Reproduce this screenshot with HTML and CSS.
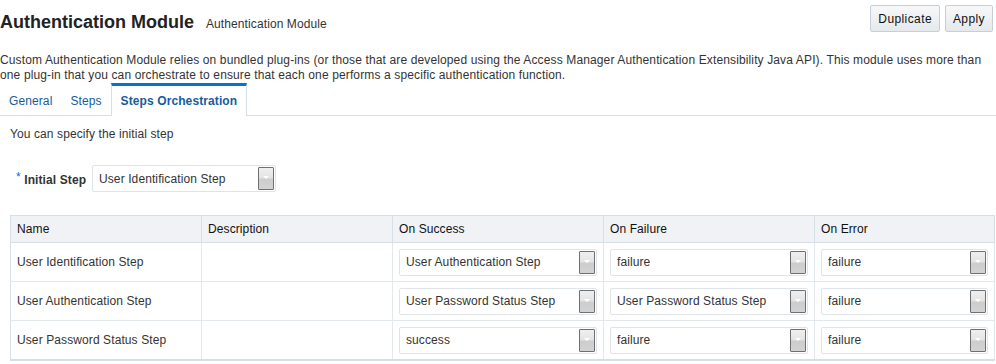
FILE: index.html
```html
<!DOCTYPE html>
<html lang="en">
<head>
    <meta charset="UTF-8">
    <title>Authentication Module</title>
    <link rel="stylesheet" href="styles.css">
</head>
<body>
    <div class="page-header">
        <div class="title-block">
            <h1>Authentication Module</h1>
            <span class="subtitle">Authentication Module</span>
        </div>
        <div class="actions">
            <button class="btn">Duplicate</button>
            <button class="btn">Apply</button>
        </div>
    </div>

    <p class="intro">Custom Authentication Module relies on bundled plug-ins (or those that are developed using the Access Manager Authentication Extensibility Java API). This module uses more than one plug-in that you can orchestrate to ensure that each one performs a specific authentication function.</p>

    <div class="tabs">
        <span class="tab">General</span>
        <span class="tab">Steps</span>
        <span class="tab tab-active">Steps Orchestration</span>
    </div>

    <div class="tab-body">
        <p class="hint">You can specify the initial step</p>

        <div class="field-row">
            <label class="field-label"><span class="required">*</span> Initial Step</label>
            <div class="choice choice-initial">
                <span class="choice-text">User Identification Step</span>
                <span class="choice-btn"></span>
            </div>
        </div>

        <table class="steps">
            <colgroup>
                <col class="c-name">
                <col class="c-desc">
                <col class="c-wide">
                <col class="c-wide">
                <col>
            </colgroup>
            <thead>
                <tr>
                    <th>Name</th>
                    <th>Description</th>
                    <th>On Success</th>
                    <th>On Failure</th>
                    <th>On Error</th>
                </tr>
            </thead>
            <tbody>
                <tr>
                    <td>User Identification Step</td>
                    <td></td>
                    <td><div class="choice"><span class="choice-text">User Authentication Step</span><span class="choice-btn"></span></div></td>
                    <td><div class="choice"><span class="choice-text">failure</span><span class="choice-btn"></span></div></td>
                    <td><div class="choice"><span class="choice-text">failure</span><span class="choice-btn"></span></div></td>
                </tr>
                <tr>
                    <td>User Authentication Step</td>
                    <td></td>
                    <td><div class="choice"><span class="choice-text">User Password Status Step</span><span class="choice-btn"></span></div></td>
                    <td><div class="choice"><span class="choice-text">User Password Status Step</span><span class="choice-btn"></span></div></td>
                    <td><div class="choice"><span class="choice-text">failure</span><span class="choice-btn"></span></div></td>
                </tr>
                <tr>
                    <td>User Password Status Step</td>
                    <td></td>
                    <td><div class="choice"><span class="choice-text">success</span><span class="choice-btn"></span></div></td>
                    <td><div class="choice"><span class="choice-text">failure</span><span class="choice-btn"></span></div></td>
                    <td><div class="choice"><span class="choice-text">failure</span><span class="choice-btn"></span></div></td>
                </tr>
            </tbody>
        </table>
    </div>
</body>
</html>
```

FILE: styles.css
```css
body {
    margin: 0;
    font-family: "Liberation Sans", Arial, sans-serif;
    font-size: 12px;
    letter-spacing: 0.1px;
    color: #333;
    background: #fff;
}
.page-header {
    display: flex;
    justify-content: space-between;
    align-items: flex-start;
    height: 44px;
}
.title-block {
    display: flex;
    align-items: baseline;
    padding-top: 12px;
}
h1 {
    margin: 0 12px 0 0;
    font-size: 18px;
    font-weight: bold;
    letter-spacing: 0;
    color: #222;
}
.subtitle {
    font-size: 12px;
    color: #333;
}
.actions {
    display: flex;
    gap: 5px;
    padding: 5px 3px 0 0;
}
.btn {
    height: 27px;
    padding: 0 7px;
    font-family: "Liberation Sans", Arial, sans-serif;
    font-size: 12px;
    letter-spacing: 0.4px;
    color: #111;
    background: linear-gradient(#f7f8f9, #e5e9ec);
    border: 1px solid #c6ced6;
    border-radius: 2px;
}
.intro {
    margin: 9px 0 0 0;
    line-height: 15px;
    letter-spacing: 0.13px;
}
.tabs {
    display: flex;
    margin-top: 0;
    border-bottom: 1px solid #d6dfe6;
    height: 32px;
}
.tab {
    padding: 11px 9px 0;
    color: #145c9e;
}
.tab-active {
    padding: 8px 9px 0;
    font-weight: bold;
    background: #fff;
    border-top: 3px solid #0572ce;
    border-left: 1px solid #d6dfe6;
    border-right: 1px solid #d6dfe6;
    margin-bottom: -1px;
}
.tab-body {
    padding: 0 1px 0 10px;
}
.hint {
    margin: 11px 0 0;
}
.field-row {
    display: flex;
    align-items: center;
    margin-top: 24px;
}
.field-label {
    width: 82px;
    padding-left: 6px;
    box-sizing: border-box;
    font-weight: bold;
    color: #333;
}
.required {
    color: #0572ce;
    font-weight: normal;
    vertical-align: 3px;
}
.choice {
    display: flex;
    align-items: center;
    justify-content: space-between;
    height: 27px;
    box-sizing: border-box;
    padding: 1px 1px 1px 6px;
    border: 1px solid #dfe4e8;
    border-radius: 2px;
    background: #fff;
    color: #333;
}
.choice-initial {
    width: 184px;
}
.choice-btn {
    position: relative;
    width: 16px;
    height: 23px;
    box-sizing: border-box;
    border: 1px solid #6f6f6f;
    border-radius: 1px;
    background: linear-gradient(#efefef 0%, #e4e4e4 45%, #cdcdcd 55%, #d3d3d3 100%);
}
.choice-btn::after {
    content: "";
    position: absolute;
    left: 4px;
    top: 8px;
    border-left: 3px solid transparent;
    border-right: 3px solid transparent;
    border-top: 3px solid #fff;
}
.steps {
    width: 985px;
    margin-top: 23px;
    border-collapse: collapse;
    table-layout: fixed;
    border: 1px solid #d6dfe6;
    border-bottom-width: 2px;
}
.c-name,
.c-desc {
    width: 191px;
}
.c-wide {
    width: 211px;
}
.steps th {
    height: 26px;
    padding: 0 6px;
    text-align: left;
    font-weight: normal;
    color: #111;
    background: #f0f2f5;
    border: 1px solid #d6dfe6;
}
.steps td {
    height: 28px;
    padding: 5px 6px;
    border: 1px solid #e3e8ec;
    border-left-color: #d6dfe6;
    vertical-align: middle;
}
```
